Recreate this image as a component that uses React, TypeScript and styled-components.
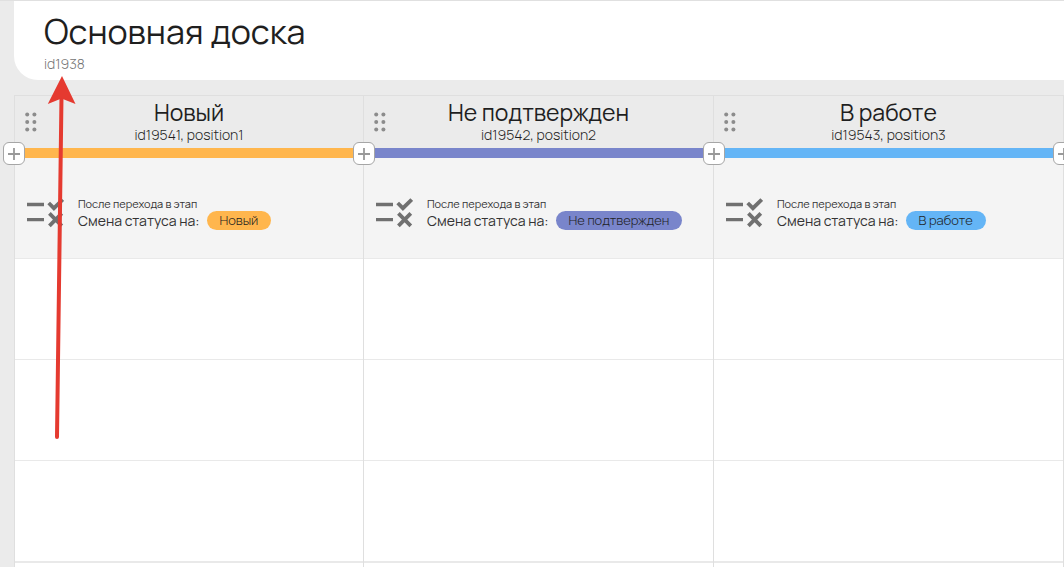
import React from "react";
import styled, { createGlobalStyle } from "styled-components";

const GlobalStyle = createGlobalStyle`
  *, *::before, *::after { box-sizing: border-box; }
  body {
    margin: 0;
    background: #ebebeb;
    color: #1f1f1f;
    font-family: Manrope, Inter, "Noto Sans", sans-serif;
  }
`;

const Page = styled.div`
  position: relative;
  display: flex;
  flex-direction: column;
  min-height: 100vh;
  overflow: hidden;
  border-top: 1px solid #e0e0e0;
`;

const PageHeader = styled.header`
  flex: none;
  margin: 0 0 15px 14px;
  padding: 8px 30px 7px;
  background: #fff;
  border-bottom-left-radius: 24px;
`;

const BoardTitle = styled.h1`
  margin: 0;
  font-size: 34px;
  line-height: 45px;
  font-weight: 400;
`;

const BoardId = styled.p`
  margin: 0;
  color: #757575;
  font-size: 14px;
  line-height: 19px;
  font-weight: 300;
`;

const Board = styled.main`
  flex: 1;
  display: grid;
  grid-template-columns: repeat(3, 1fr);
  margin-left: 14px;
`;

const Column = styled.section`
  position: relative;
  display: flex;
  flex-direction: column;
  min-width: 0;
  border-top: 1px solid #dfdfdf;
  border-right: 1px solid #dfdfdf;
  background: #fff;

  &:first-child {
    border-left: 1px solid #dfdfdf;
  }
`;

const ColumnHeader = styled.header<{ $color: string }>`
  display: grid;
  grid-template-columns: 24px 1fr 24px;
  height: 62px;
  padding: 3px 10px 0;
  background: #ebebeb;
  border-bottom: 10px solid ${(p) => p.$color};
`;

const DragHandle = styled.button`
  display: flex;
  align-items: center;
  padding: 0 0 4px;
  border: 0;
  background: none;
  color: #8c8c8c;
  cursor: grab;
`;

const Heading = styled.div`
  text-align: center;
  white-space: nowrap;
`;

const ColumnTitle = styled.h2`
  margin: 0;
  font-size: 23px;
  line-height: 26px;
  font-weight: 400;
`;

const ColumnMeta = styled.p`
  margin: 0;
  font-size: 14px;
  line-height: 20px;
  font-weight: 300;
`;

const AddButton = styled.button<{ $edge: "left" | "right" }>`
  position: absolute;
  z-index: 1;
  top: 46px;
  ${(p) => p.$edge}: -12px;
  display: flex;
  align-items: center;
  justify-content: center;
  width: 22px;
  height: 23px;
  padding: 0;
  border: 1px solid #a6a6a6;
  border-radius: 6px;
  background: #fff;
  color: #999;
`;

const Action = styled.article`
  display: flex;
  align-items: flex-start;
  gap: 14px;
  height: 101px;
  padding: 39px 12px 0;
  background: #f4f4f4;
  border-bottom: 1px solid #e9e9e9;
  white-space: nowrap;
`;

const ActionTrigger = styled.p`
  margin: 0;
  color: #333;
  font-size: 11px;
  line-height: 14px;
  font-weight: 400;
`;

const ActionRow = styled.div`
  display: flex;
  align-items: flex-start;
  gap: 7px;
  color: #333;
  font-size: 14px;
  line-height: 20px;
  font-weight: 400;
`;

const Status = styled.span<{ $color: string }>`
  padding: 0 13px;
  border-radius: 10px;
  background: ${(p) => p.$color};
  color: #1f1f1f;
  font-size: 13px;
  line-height: 19px;
  font-weight: 300;
`;

const Cell = styled.div`
  flex: none;
  height: 101px;
  border-bottom: 1px solid #e9e9e9;

  &:last-child {
    height: 102px;
    border-bottom-width: 2px;
  }
`;

const Pointer = styled.svg`
  position: absolute;
  z-index: 2;
  top: 75px;
  left: 46px;
  pointer-events: none;
`;

const DotsIcon = () => (
  <svg width="12" height="20" viewBox="0 0 12 20" fill="currentColor" aria-hidden="true">
    {[2.5, 10, 17.5].map((y) => (
      <React.Fragment key={y}>
        <circle cx="2.2" cy={y} r="2" />
        <circle cx="9.4" cy={y} r="2" />
      </React.Fragment>
    ))}
  </svg>
);

const PlusIcon = () => (
  <svg width="12" height="12" viewBox="0 0 12 12" fill="none" stroke="currentColor" strokeWidth="1.8" aria-hidden="true">
    <path d="M0 6h12M6 0v12" />
  </svg>
);

const ChecklistIcon = () => (
  <svg width="37" height="31" viewBox="0 0 37 31" fill="none" stroke="#707070" aria-hidden="true">
    <path strokeWidth="3.4" d="M0 7.500h17M0 22.600h17" />
    <path strokeWidth="3.800" d="M21.700 6l5.200 5.200L35.700 2.500M22.400 16.400l12.400 12.400M34.800 16.400L22.400 28.800" />
  </svg>
);

const columns = [
  { id: 19541, position: 1, title: "Новый", color: "#ffb64d" },
  { id: 19542, position: 2, title: "Не подтвержден", color: "#7985cb" },
  { id: 19543, position: 3, title: "В работе", color: "#64b5f6" },
];

export default function App() {
  return (
    <>
      <GlobalStyle />
      <Page>
        <PageHeader>
          <BoardTitle>Основная доска</BoardTitle>
          <BoardId>id1938</BoardId>
        </PageHeader>
        <Board>
          {columns.map((column, index) => (
            <Column key={column.id}>
              {index === 0 && (
                <AddButton $edge="left" aria-label="Добавить этап">
                  <PlusIcon />
                </AddButton>
              )}
              <AddButton $edge="right" aria-label="Добавить этап">
                <PlusIcon />
              </AddButton>
              <ColumnHeader $color={column.color}>
                <DragHandle aria-label="Переместить этап">
                  <DotsIcon />
                </DragHandle>
                <Heading>
                  <ColumnTitle>{column.title}</ColumnTitle>
                  <ColumnMeta>
                    id{column.id}, position{column.position}
                  </ColumnMeta>
                </Heading>
              </ColumnHeader>
              <Action>
                <ChecklistIcon />
                <div>
                  <ActionTrigger>После перехода в этап</ActionTrigger>
                  <ActionRow>
                    Смена статуса на:
                    <Status $color={column.color}>{column.title}</Status>
                  </ActionRow>
                </div>
              </Action>
              <Cell />
              <Cell />
              <Cell />
            </Column>
          ))}
        </Board>
        <Pointer width="32" height="366" viewBox="0 0 32 366" aria-hidden="true">
          <path d="M15.5 20L11 361" stroke="#e53a30" strokeWidth="4" strokeLinecap="round" fill="none" />
          <path d="M16 0L29.5 28L15.5 22.500L1.800 28Z" fill="#e53a30" />
        </Pointer>
      </Page>
    </>
  );
}
